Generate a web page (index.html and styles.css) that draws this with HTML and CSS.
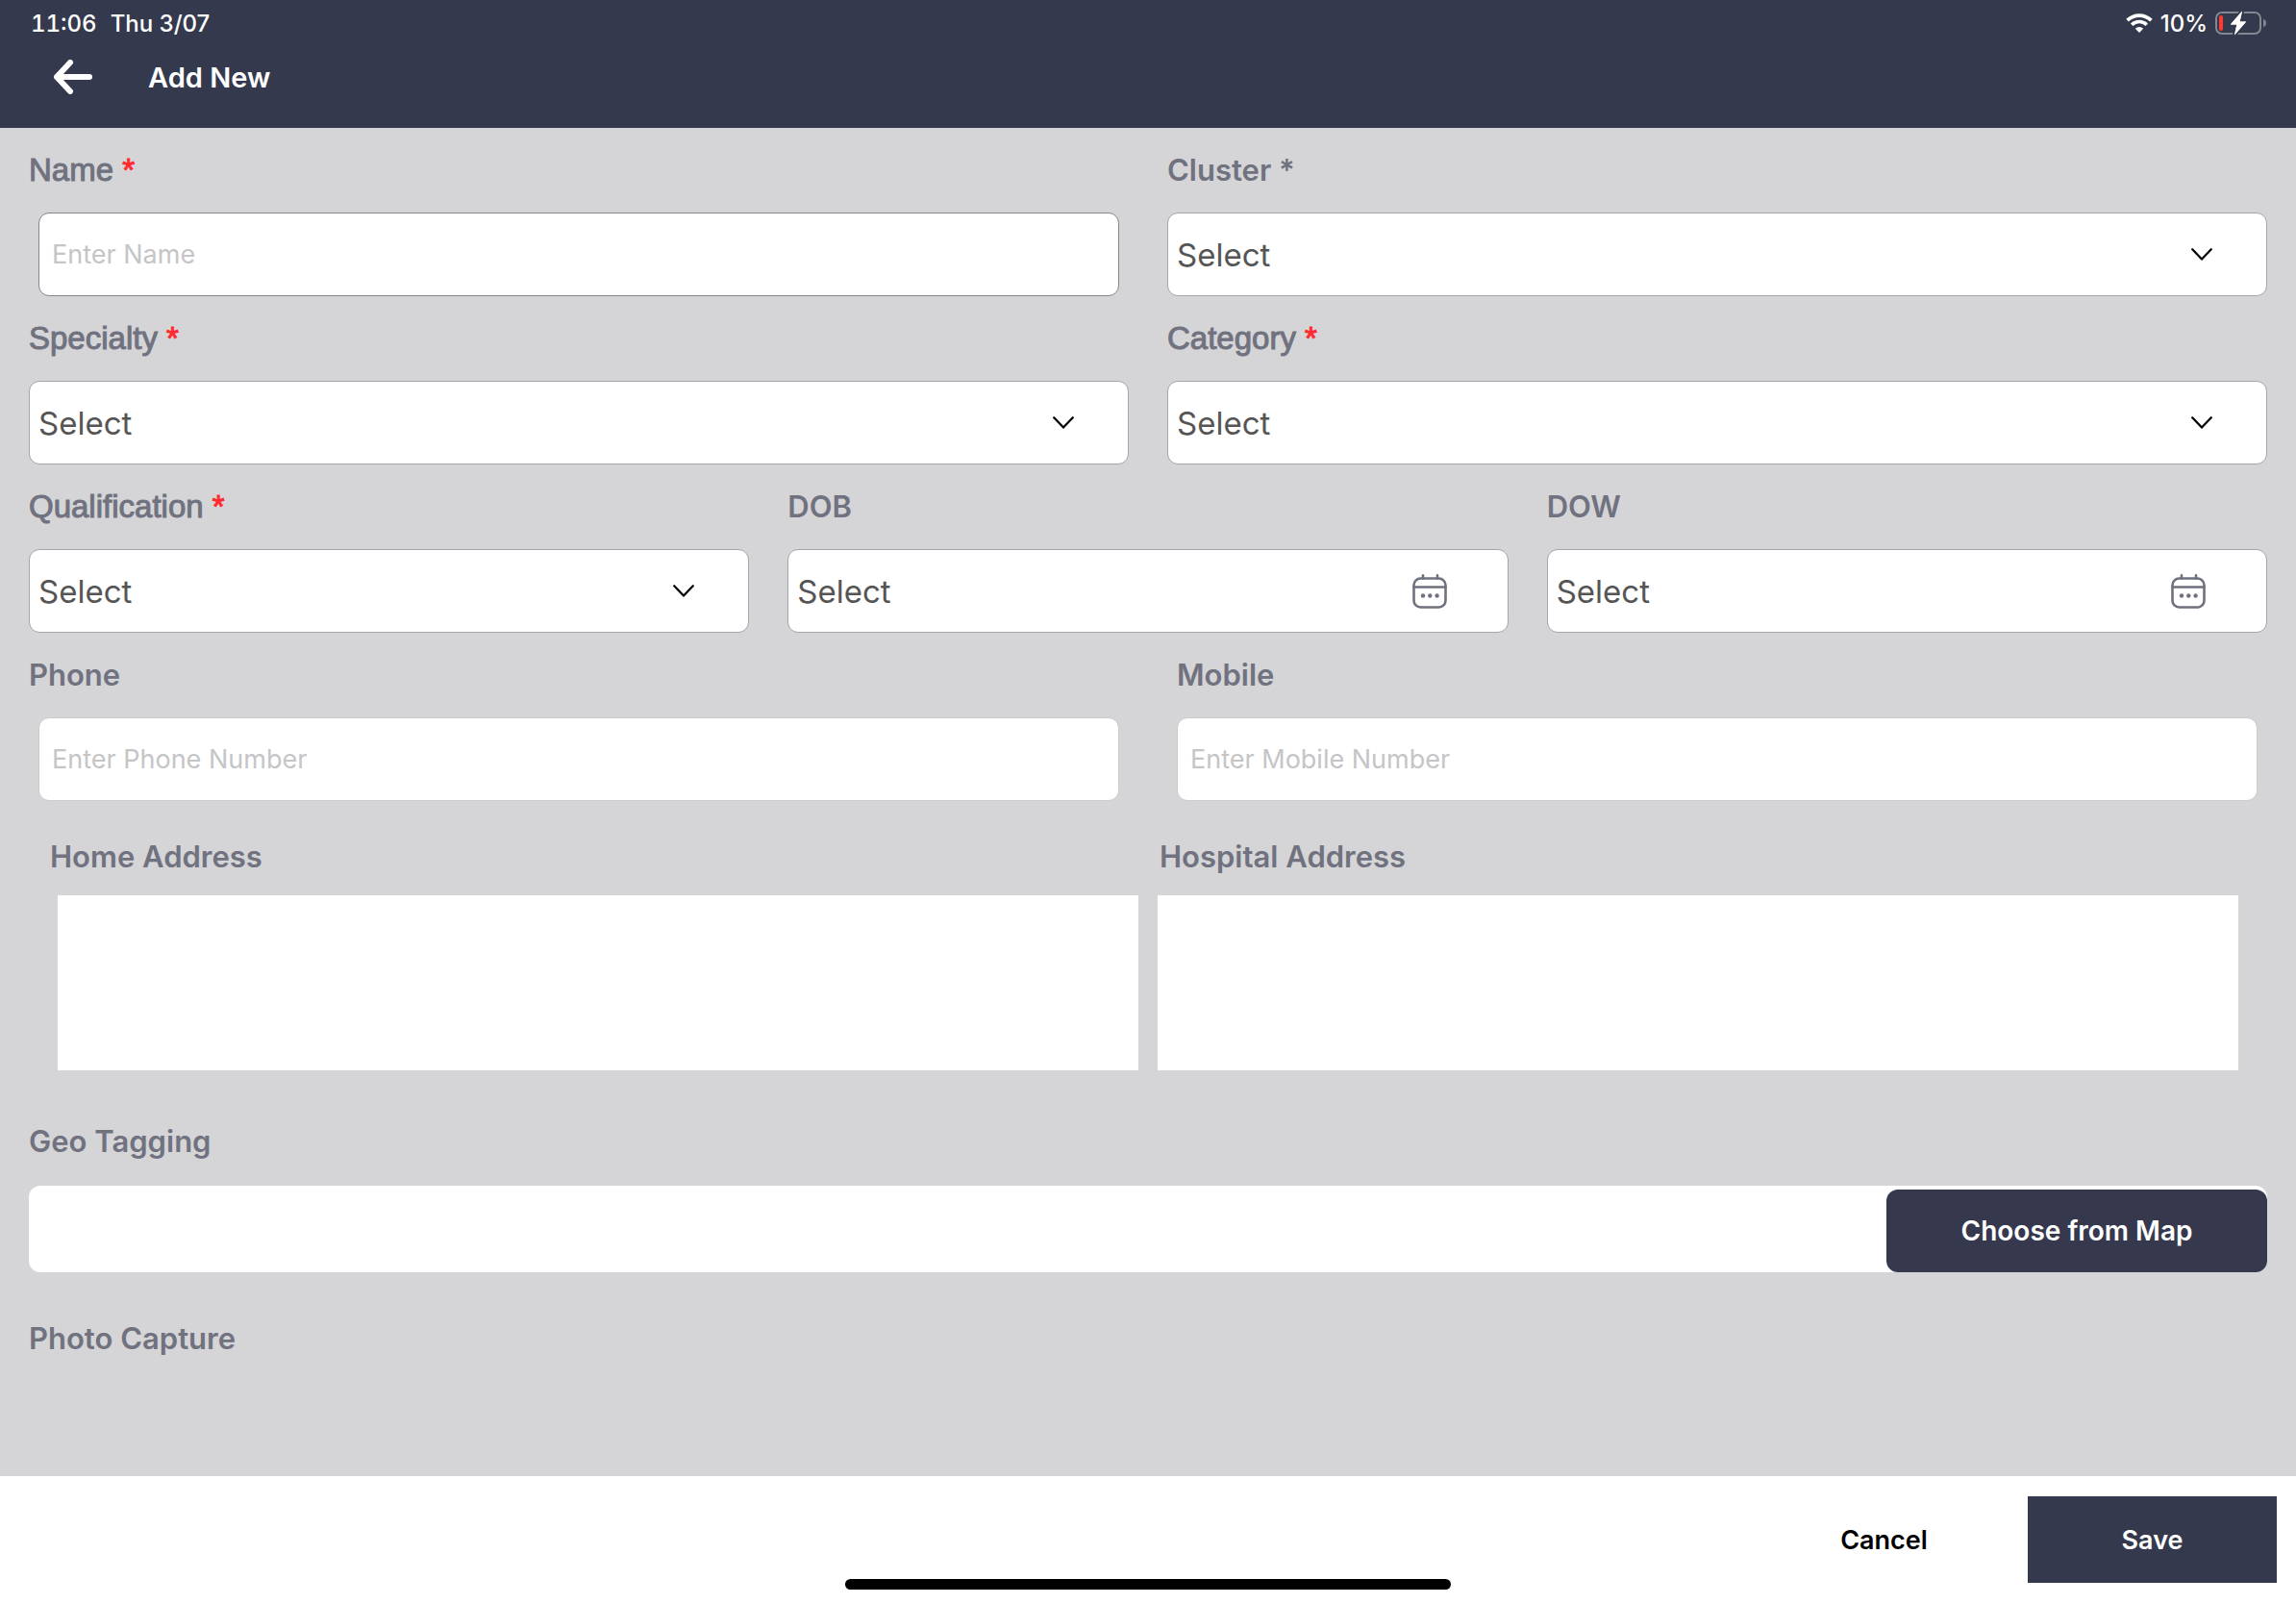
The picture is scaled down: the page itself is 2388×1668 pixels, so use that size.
FILE: index.html
```html
<!DOCTYPE html>
<html lang="en">
<head>
<meta charset="utf-8">
<meta name="viewport" content="width=device-width, initial-scale=1">
<title>Add New</title>
<link rel="stylesheet" href="styles.css">
</head>
<body>
<svg class="sprite" aria-hidden="true">
  <symbol id="chevron" viewBox="0 0 22 14">
    <path d="M1.2 1.2 11 11.6 20.8 1.2" fill="none" stroke="#000" stroke-width="2.2" stroke-linecap="round" stroke-linejoin="round"/>
  </symbol>
  <symbol id="calendar" viewBox="0 0 36 36">
    <rect x="1.5" y="4.5" width="33" height="30" rx="7" fill="none" stroke="#6f717f" stroke-width="2.6"/>
    <path d="M1.5 13.5h33M11 1.4v3M26 1.4v3" fill="none" stroke="#6f717f" stroke-width="2.6" stroke-linecap="round"/>
    <g fill="#6f717f"><circle cx="11" cy="22.5" r="2.2"/><circle cx="18.3" cy="22.5" r="2.2"/><circle cx="25.6" cy="22.5" r="2.2"/></g>
  </symbol>
</svg>

<header class="header">
  <div class="status">
    <span class="time">11:06</span>
    <span>Thu 3/07</span>
    <span class="status-right">
      <svg width="28" height="20" viewBox="0 0 28 20" aria-hidden="true">
        <path d="M1.6 7.2a17.6 17.6 0 0 1 24.8 0" fill="none" stroke="#fff" stroke-width="3.8"/>
        <path d="M6.2 11.8a11 11 0 0 1 15.6 0" fill="none" stroke="#fff" stroke-width="3.6"/>
        <path d="M14 20l-4.2-4.3a6 6 0 0 1 8.4 0z" fill="#fff"/>
      </svg>
      <span>10%</span>
      <svg width="54" height="26" viewBox="0 0 54 26" aria-hidden="true">
        <rect x="1" y="2" width="46" height="22" rx="6" fill="none" stroke="#85868f" stroke-width="2"/>
        <path d="M50 9v8c2-.6 3-2 3-4s-1-3.400-3-4z" fill="#85868f"/>
        <rect x="4" y="5" width="4" height="16" rx="2" fill="#ff3b30"/>
        <path d="M28 .6 15.800 14.600h6.600L20 25.400 32.200 11.400h-6.600z" fill="#fff" stroke="#35394d" stroke-width="4" stroke-linejoin="round" paint-order="stroke"/>
        <path d="M28 .6 15.800 14.600h6.600L20 25.400 32.200 11.400h-6.600z" fill="#fff"/>
      </svg>
    </span>
  </div>
  <div class="titlebar">
    <button class="back" type="button" aria-label="Back">
      <svg width="40" height="36" viewBox="0 0 40 36" aria-hidden="true">
        <path d="M17 3 3 18l14 15M3 18H37" fill="none" stroke="#fff" stroke-width="6" stroke-linecap="round" stroke-linejoin="round"/>
      </svg>
    </button>
    <h1 class="title">Add New</h1>
  </div>
</header>

<form class="form" id="add-form">
  <div class="row">
    <div class="field">
      <label class="label label-required" for="name">Name <span class="star">*</span></label>
      <div class="inset"><input class="control control-text control-strong" id="name" type="text" placeholder="Enter Name"></div>
    </div>
    <div class="field">
      <label class="label" for="cluster">Cluster *</label>
      <div class="picker">
        <select class="control" id="cluster"><option>Select</option></select>
        <svg class="chevron" aria-hidden="true"><use href="#chevron"/></svg>
      </div>
    </div>
  </div>

  <div class="row">
    <div class="field">
      <label class="label label-required" for="specialty">Specialty <span class="star">*</span></label>
      <div class="picker">
        <select class="control" id="specialty"><option>Select</option></select>
        <svg class="chevron" aria-hidden="true"><use href="#chevron"/></svg>
      </div>
    </div>
    <div class="field">
      <label class="label label-required" for="category">Category <span class="star">*</span></label>
      <div class="picker">
        <select class="control" id="category"><option>Select</option></select>
        <svg class="chevron" aria-hidden="true"><use href="#chevron"/></svg>
      </div>
    </div>
  </div>

  <div class="row">
    <div class="field">
      <label class="label label-required" for="qualification">Qualification <span class="star">*</span></label>
      <div class="picker">
        <select class="control" id="qualification"><option>Select</option></select>
        <svg class="chevron" aria-hidden="true"><use href="#chevron"/></svg>
      </div>
    </div>
    <div class="field">
      <label class="label" for="dob">DOB</label>
      <div class="picker">
        <input class="control" id="dob" type="text" placeholder="Select">
        <svg class="calendar" aria-hidden="true"><use href="#calendar"/></svg>
      </div>
    </div>
    <div class="field">
      <label class="label" for="dow">DOW</label>
      <div class="picker">
        <input class="control" id="dow" type="text" placeholder="Select">
        <svg class="calendar" aria-hidden="true"><use href="#calendar"/></svg>
      </div>
    </div>
  </div>

  <div class="row">
    <div class="field">
      <label class="label" for="phone">Phone</label>
      <div class="inset"><input class="control control-text control-soft" id="phone" type="tel" placeholder="Enter Phone Number"></div>
    </div>
    <div class="field inset">
      <label class="label" for="mobile">Mobile</label>
      <input class="control control-text control-soft" id="mobile" type="tel" placeholder="Enter Mobile Number">
    </div>
  </div>

  <div class="addresses">
    <div class="field field-address">
      <label class="label label-address" for="home">Home Address</label>
      <textarea class="area area-home" id="home"></textarea>
    </div>
    <div class="field field-address">
      <label class="label label-address" for="hospital">Hospital Address</label>
      <textarea class="area" id="hospital"></textarea>
    </div>
  </div>

  <div class="field field-geo">
    <label class="label" for="geo">Geo Tagging</label>
    <div class="geo">
      <input class="geo-input" id="geo" type="text">
      <button class="geo-button" type="button">Choose from Map</button>
    </div>
  </div>

  <h2 class="label">Photo Capture</h2>
</form>

<footer class="footer">
  <button class="action" type="button">Cancel</button>
  <button class="action action-primary" type="submit" form="add-form">Save</button>
  <span class="home-indicator"></span>
</footer>
</body>
</html>
```

FILE: styles.css
```css
* {
  box-sizing: border-box;
}

body {
  margin: 0;
  min-height: 100vh;
  display: flex;
  flex-direction: column;
  background: #d5d5d7;
  font-family: Inter, "Liberation Sans", sans-serif;
}

button,
input,
select,
textarea {
  margin: 0;
  font: inherit;
}

button {
  border: 0;
  cursor: pointer;
}

.sprite {
  display: none;
}

/* Header */
.header {
  height: 133px;
  background: #35394d;
  color: #fff;
}

.status {
  display: flex;
  align-items: center;
  gap: 14px;
  height: 48px;
  padding: 0 30px 0 32px;
  font-size: 24px;
  font-weight: 500;
}

.time {
  font-variant-numeric: tabular-nums;
}

.status-right {
  display: flex;
  align-items: center;
  gap: 8px;
  margin-left: auto;
}

.titlebar {
  display: flex;
  align-items: center;
  gap: 58px;
  height: 64px;
  padding-left: 56px;
}

.back {
  display: flex;
  padding: 0;
  background: none;
}

.title {
  margin: 0;
  font-size: 29px;
  font-weight: 600;
}

/* Form */
.form {
  flex: 1;
  display: flex;
  flex-direction: column;
  gap: 24px;
  padding: 24px 30px;
}

.row {
  display: grid;
  grid-auto-flow: column;
  grid-auto-columns: minmax(0, 1fr);
  gap: 40px;
}

.field {
  display: flex;
  flex-direction: column;
  gap: 24px;
}

.inset {
  padding: 0 10px;
}

.label {
  margin: 0;
  color: #70727f;
  font-size: 31px;
  font-weight: 600;
  line-height: 40px;
}

.label-required {
  font-family: "Liberation Sans", Arial, sans-serif;
  font-size: 33px;
  font-weight: 400;
  -webkit-text-stroke: 1px #70727f;
}

.label-address {
  padding-left: 2px;
}

.star {
  color: #ff2a2f;
  -webkit-text-stroke-color: #ff2a2f;
}

.control {
  display: block;
  width: 100%;
  height: 87px;
  padding: 0 9px;
  border: 1px solid #a5a5ad;
  border-radius: 11px;
  background: #fff;
  color: #555;
  font-size: 33px;
  appearance: none;
}

.control::placeholder {
  color: #555;
  opacity: 1;
}

.control-text {
  padding: 0 13px;
  font-size: 27px;
}

.control-text::placeholder {
  color: #c5c5c7;
}

.control-strong {
  border-color: #86868b;
}

.control-soft {
  border-color: #cbcbcd;
}

/* A control with its icon stacked over the right end */
.picker {
  display: grid;
  align-items: center;
}

.picker > * {
  grid-area: 1 / 1;
}

.chevron,
.calendar {
  justify-self: end;
  pointer-events: none;
}

.chevron {
  width: 22px;
  height: 14px;
  margin-right: 57px;
}

.calendar {
  width: 36px;
  height: 36px;
  margin-right: 64px;
}

.addresses {
  display: grid;
  grid-template-columns: calc(50% - 5px) minmax(0, 1fr);
  gap: 20px;
  padding: 14px 30px 30px 20px;
}

.field-address {
  gap: 20px;
}

.area {
  height: 182px;
  padding: 12px;
  border: 0;
  background: #fff;
  color: #555;
  font-size: 27px;
  resize: none;
}

.area-home {
  margin-left: 10px;
}

.field-geo {
  gap: 26px;
  padding-bottom: 25px;
}

.geo {
  display: flex;
  align-items: flex-end;
  height: 90px;
  border-radius: 12px;
  background: #fff;
}

.geo-input {
  flex: 1;
  min-width: 0;
  height: 100%;
  padding: 0 12px;
  border: 0;
  background: none;
  color: #555;
  font-size: 27px;
}

.geo-button {
  width: 396px;
  height: 86px;
  border-radius: 12px;
  background: #36384d;
  color: #fff;
  font-size: 28px;
  font-weight: 600;
}

/* Footer */
.footer {
  position: relative;
  display: flex;
  justify-content: flex-end;
  gap: 20px;
  height: 133px;
  padding: 21px 20px 0;
  background: #fff;
}

.action {
  width: 259px;
  height: 90px;
  background: none;
  color: #000;
  font-size: 27px;
  font-weight: 600;
}

.action-primary {
  background: #34394d;
  color: #fff;
}

.home-indicator {
  position: absolute;
  bottom: 15px;
  left: 50%;
  width: 630px;
  height: 11px;
  border-radius: 6px;
  background: #000;
  transform: translateX(-50%);
}
```
